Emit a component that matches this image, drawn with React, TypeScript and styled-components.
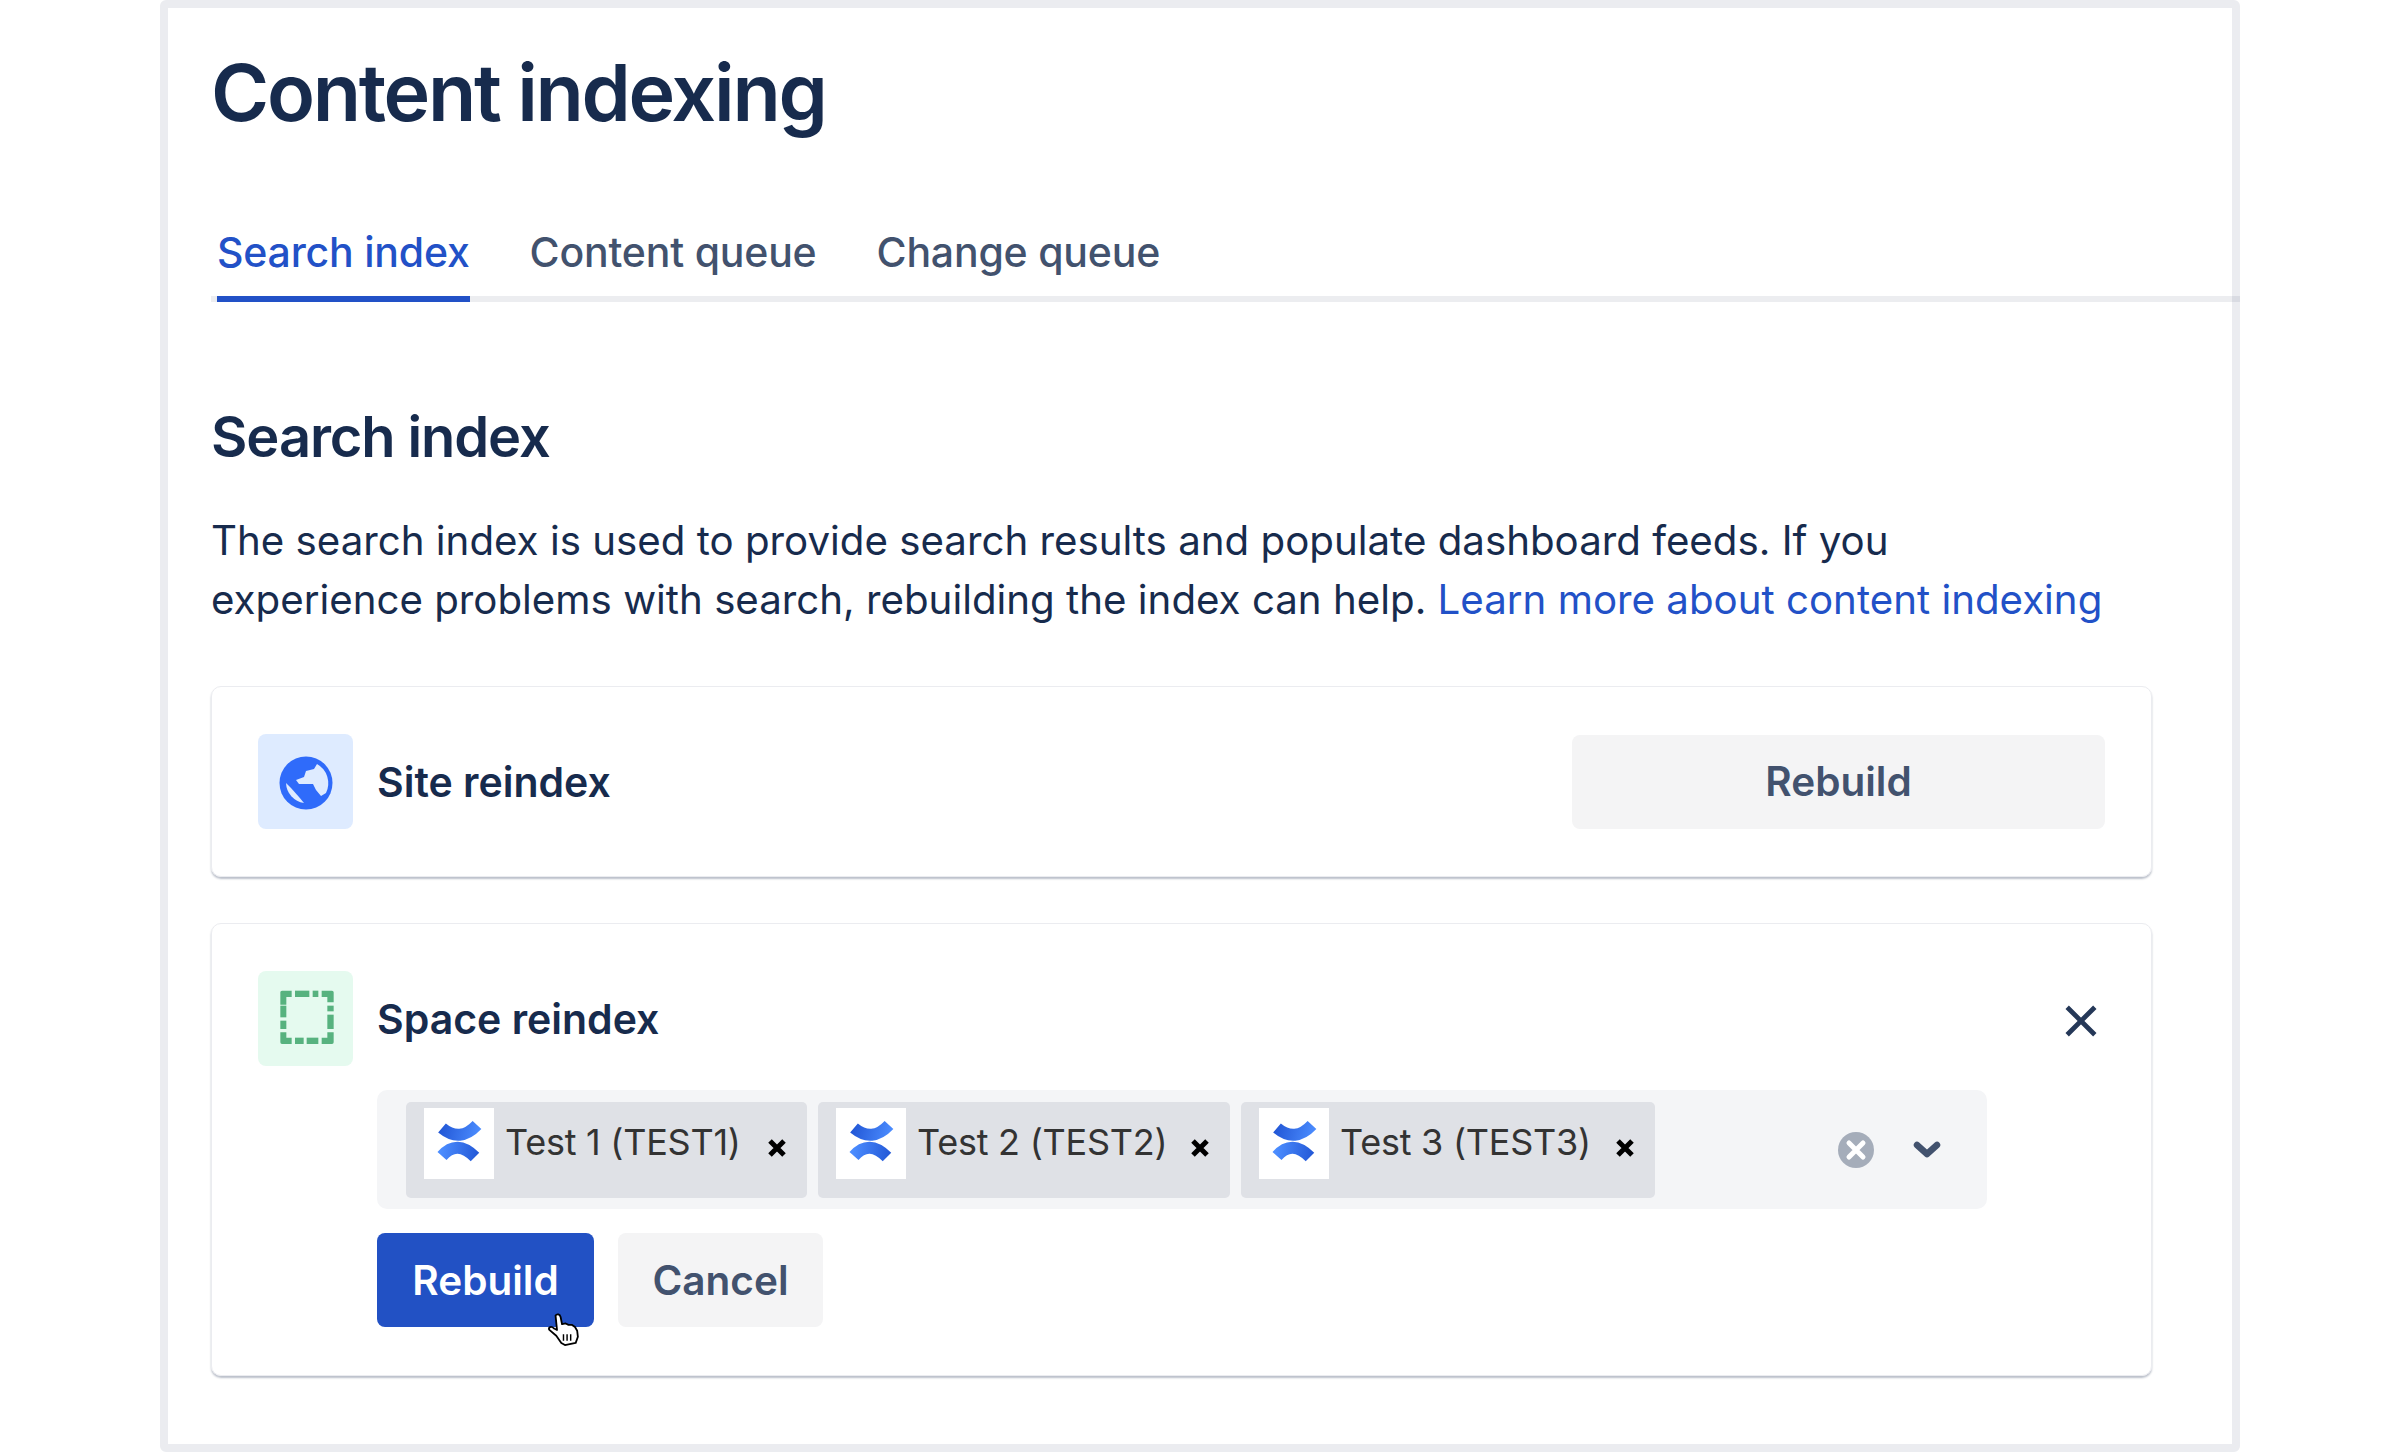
import React from "react";
import styled, { createGlobalStyle } from "styled-components";

const GlobalStyle = createGlobalStyle`
    html, body {
        margin: 0;
        padding: 0;
        background: white;
        font-family: Inter, "Liberation Sans", sans-serif;
        color: #172b4d;
    }
`;

const Page = styled.div`
    width: 2400px;
    height: 1452px;
    padding: 0 160px;
    box-sizing: border-box;
    overflow: hidden;
`;

const Frame = styled.main`
    height: 100%;
    box-sizing: border-box;
    border: 8px solid #ebecf0;
    border-radius: 6px;
    padding: 42px 80px 0 43px;
`;

const Title = styled.h1`
    margin: 0;
    font-size: 79px;
    line-height: 84px;
    font-weight: 600;
    letter-spacing: -2.3px;
`;

const TabBar = styled.div`
    display: flex;
    gap: 60px;
    margin: 93px -88px 0 0;
    padding-left: 6px;
    box-shadow: inset 0 -6px 0 rgba(9, 30, 66, 0.08);
`;

const Tab = styled.div<{ $active?: boolean }>`
    font-size: 41px;
    line-height: 50px;
    font-weight: 500;
    letter-spacing: -0.2px;
    padding-bottom: 25px;
    color: ${(props) => (props.$active ? "#2251c7" : "#42526e")};
    box-shadow: ${(props) => (props.$active ? "inset 0 -6px 0 #2251c7" : "none")};
`;

const Heading = styled.h2`
    margin: 103px 0 0;
    font-size: 56px;
    line-height: 64px;
    font-weight: 600;
    letter-spacing: -1.1px;
`;

const Paragraph = styled.p`
    margin: 42px 0 57px;
    font-size: 40.25px;
    line-height: 59px;
    font-weight: 400;
`;

const Link = styled.a`
    color: #2251c7;
    text-decoration: none;
`;

const Card = styled.section<{ $last?: boolean }>`
    box-sizing: border-box;
    display: flex;
    flex-direction: column;
    gap: 24px;
    padding: 47px 46px ${(props) => (props.$last ? "48px" : "47px")};
    margin-bottom: 46px;
    border: 1px solid #ebecf0;
    border-radius: 10px;
    box-shadow: 0 2px 2px rgba(9, 30, 66, 0.28);
`;

const CardHeader = styled.div`
    display: flex;
    align-items: center;
    gap: 24px;
`;

const IconBox = styled.div<{ $bg: string }>`
    width: 95px;
    height: 95px;
    flex: none;
    display: flex;
    align-items: center;
    justify-content: center;
    border-radius: 8px;
    background: ${(props) => props.$bg};
`;

const CardTitle = styled.div`
    flex: 1;
    font-size: 41px;
    line-height: 50px;
    font-weight: 600;
`;

const Button = styled.button<{ $primary?: boolean; $width: number }>`
    width: ${(props) => props.$width}px;
    height: 94px;
    border: none;
    border-radius: 8px;
    padding: 0;
    font-family: inherit;
    font-size: 40.5px;
    font-weight: 600;
    background: ${(props) => (props.$primary ? "#2251c4" : "#f4f4f5")};
    color: ${(props) => (props.$primary ? "white" : "#42526e")};
`;

const CardBody = styled.div`
    display: flex;
    flex-direction: column;
    gap: 24px;
    margin-left: 119px;
`;

const SelectBox = styled.div`
    width: 1610px;
    height: 119px;
    box-sizing: border-box;
    display: flex;
    align-items: center;
    gap: 11px;
    padding: 0 46px 0 29px;
    border-radius: 10px;
    background: #f4f5f7;
`;

const Chip = styled.div<{ $width: number }>`
    width: ${(props) => props.$width}px;
    height: 96px;
    box-sizing: border-box;
    display: flex;
    gap: 11px;
    padding: 6px 0 0 18px;
    border-radius: 5px;
    background: #dfe1e6;
`;

const ChipAvatar = styled.div`
    width: 70px;
    height: 71px;
    flex: none;
    background: white;
`;

const ChipLabel = styled.div`
    flex: 1;
    font-size: 36px;
    line-height: 68px;
    letter-spacing: -0.25px;
    color: #333;
    white-space: nowrap;
`;

const ChipRemove = styled.svg`
    flex: none;
    width: 20px;
    height: 20px;
    margin: 30px 20px 0 0;
`;

const SelectControls = styled.div`
    margin-left: auto;
    display: flex;
    align-items: center;
    gap: 39px;
`;

const ButtonRow = styled.div`
    position: relative;
    display: flex;
    gap: 24px;
`;

const Cursor = styled.svg`
    position: absolute;
    left: 162px;
    top: 66px;
    width: 54px;
    height: 54px;
`;

const CloseIcon = styled.svg`
    width: 34px;
    height: 34px;
    margin: 5px 7px 0 0;
`;

const GlobeIcon = () => (
    <svg width="70" height="70" viewBox="0 0 70 70">
        <circle cx="35" cy="36" r="26.5" fill="#2f6bfa" />
        <path d="M25 33 L33 30 L35 24 L43 22 L46 17 A22 22 0 0 1 55 46 L50 49 L45 43 L42 37 L28 37 Z" fill="#deebff" />
        <path d="M15 36 L20 41 L28 50 L33 56 A21 21 0 0 1 15 36 Z" fill="#deebff" />
    </svg>
);

const SpaceIcon = () => (
    <svg width="70" height="70" viewBox="0 0 210 210" fill="#57b27f">
        <path d="M28 62 V25 Q28 20 33 20 H62 V39 H46 V62 Z" />
        <rect x="72" y="20" width="43" height="19" />
        <rect x="125" y="20" width="17" height="19" />
        <path d="M152 20 H183 Q188 20 188 25 V55 H169 V39 H152 Z" />
        <rect x="28" y="65" width="18" height="35" />
        <rect x="28" y="110" width="18" height="25" />
        <path d="M28 145 H46 V161 H62 V180 H33 Q28 180 28 175 Z" />
        <rect x="169" y="65" width="19" height="17" />
        <rect x="169" y="92" width="19" height="43" />
        <path d="M169 145 H188 V175 Q188 180 183 180 H152 V161 H169 Z" />
        <rect x="72" y="161" width="26" height="19" />
        <rect x="107" y="161" width="35" height="19" />
    </svg>
);

const ConfluenceLogo = ({ id }: { id: string }) => (
    <svg width="70" height="71" viewBox="0 0 70 71" fill="none" strokeWidth="12">
        <defs>
            <linearGradient id={`${id}-a`} gradientUnits="userSpaceOnUse" x1="16" y1="20" x2="55" y2="30">
                <stop offset="0" stopColor="#2257d6" />
                <stop offset="1" stopColor="#4c8dff" />
            </linearGradient>
            <linearGradient id={`${id}-b`} gradientUnits="userSpaceOnUse" x1="16" y1="45" x2="55" y2="50">
                <stop offset="0" stopColor="#4c8dff" />
                <stop offset="1" stopColor="#2257d6" />
            </linearGradient>
        </defs>
        <path d="M18 20 Q36 35 53 17" stroke={`url(#${id}-a)`} />
        <path d="M18 48 Q33 31 51 49" stroke={`url(#${id}-b)`} />
    </svg>
);

const spaces = [
    { id: "t1", label: "Test 1 (TEST1)", width: 401 },
    { id: "t2", label: "Test 2 (TEST2)", width: 412 },
    { id: "t3", label: "Test 3 (TEST3)", width: 414 },
];

export default function App() {
    return (
        <Page>
            <GlobalStyle />
            <Frame>
                <Title>Content indexing</Title>
                <TabBar>
                    <Tab $active>Search index</Tab>
                    <Tab>Content queue</Tab>
                    <Tab>Change queue</Tab>
                </TabBar>
                <Heading>Search index</Heading>
                <Paragraph>
                    The search index is used to provide search results and populate dashboard feeds. If you
                    <br />
                    experience problems with search, rebuilding the index can help.{" "}
                    <Link>Learn more about content indexing</Link>
                </Paragraph>
                <Card>
                    <CardHeader>
                        <IconBox $bg="#deebff">
                            <GlobeIcon />
                        </IconBox>
                        <CardTitle>Site reindex</CardTitle>
                        <Button $width={533}>Rebuild</Button>
                    </CardHeader>
                </Card>
                <Card $last>
                    <CardHeader>
                        <IconBox $bg="#e5faef">
                            <SpaceIcon />
                        </IconBox>
                        <CardTitle>Space reindex</CardTitle>
                        <CloseIcon viewBox="0 0 32 32" stroke="#253858" strokeWidth="4.5">
                            <path d="M3 3 L29 29 M29 3 L3 29" />
                        </CloseIcon>
                    </CardHeader>
                    <CardBody>
                        <SelectBox>
                            {spaces.map((space) => (
                                <Chip key={space.id} $width={space.width}>
                                    <ChipAvatar>
                                        <ConfluenceLogo id={space.id} />
                                    </ChipAvatar>
                                    <ChipLabel>{space.label}</ChipLabel>
                                    <ChipRemove viewBox="0 0 20 20" stroke="#000" strokeWidth="5">
                                        <path d="M3 3 L17 17 M17 3 L3 17" />
                                    </ChipRemove>
                                </Chip>
                            ))}
                            <SelectControls>
                                <svg width="36" height="36" viewBox="0 0 36 36">
                                    <circle cx="18" cy="18" r="18" fill="#a5adba" />
                                    <path d="M11 11 L25 25 M25 11 L11 25" stroke="#fff" strokeWidth="5" strokeLinecap="round" />
                                </svg>
                                <svg width="28" height="20" viewBox="0 0 28 20" fill="none">
                                    <path d="M4 5 L14 14 L24 5" stroke="#42526e" strokeWidth="6.5" strokeLinecap="round" strokeLinejoin="round" />
                                </svg>
                            </SelectControls>
                        </SelectBox>
                        <ButtonRow>
                            <Button $primary $width={217}>
                                Rebuild
                            </Button>
                            <Button $width={205}>Cancel</Button>
                            <Cursor viewBox="0 0 150 150">
                                <path
                                    d="M46 46 C50 40 58 42 60 50 L64 70 L74 68 L82 72 L92 72 L100 78 L106 88 L108 105 L102 122 L72 128 L62 122 L48 102 L28 85 C26 78 34 74 42 82 L50 86 Z"
                                    fill="#fff"
                                    stroke="#000"
                                    strokeWidth="5"
                                    strokeLinejoin="round"
                                />
                                <path d="M68 98 V116 M78 98 V116 M88 98 V116" stroke="#000" strokeWidth="4" />
                            </Cursor>
                        </ButtonRow>
                    </CardBody>
                </Card>
            </Frame>
        </Page>
    );
}
